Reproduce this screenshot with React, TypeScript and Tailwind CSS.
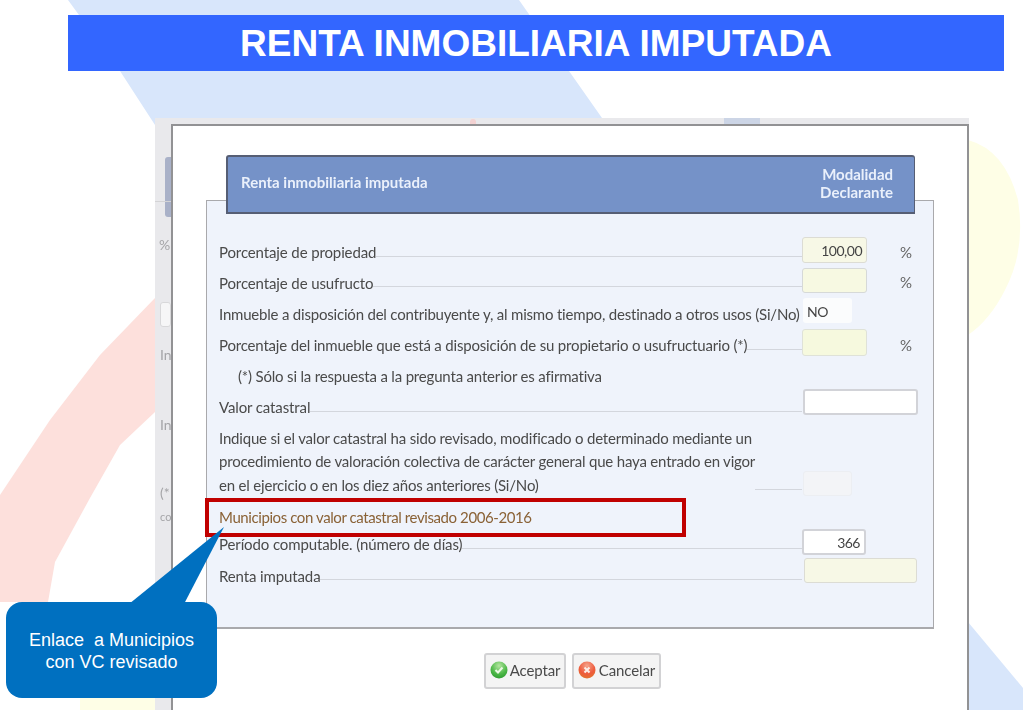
import type { ReactNode } from 'react';

const dialogFont = "font-['Lato','Noto_Sans',sans-serif]";

function Background() {
  return (
    <svg className="absolute left-0 top-0 w-[1023px] h-[710px]" viewBox="0 0 1023 710">
      <path d="M68 0 L519 0 L569 71 L602 118 L155 125 L120 71 Z" fill="#d8e6fb" />
      <path d="M968 622 L1023 688 L1023 710 L968 710 Z" fill="#d8e6fb" />
      <path d="M155 298 L100 355 L50 420 L0 495 L0 602 L48 602 L55 562 L90 498 L120 445 L155 412 Z" fill="#fde0dc" />
      <path d="M968 140 Q1005 150 1018 200 Q1026 250 1005 290 Q990 320 968 335 Z" fill="#fefee6" />
      <rect x="80" y="698" width="75" height="12" fill="#fefee6" />
    </svg>
  );
}

function Field({ className, children }: { className: string; children?: ReactNode }) {
  return (
    <div className={`h-full flex items-center px-[4px] text-[14px] tracking-[-0.5px] rounded-[3px] text-[#444] ${className}`}>
      {children}
    </div>
  );
}

interface RowProps {
  label: string;
  height: string;
  offset: string;
  labelShift?: string;
  lineShift?: string;
  field: ReactNode;
  percent?: boolean;
}

function Row({ label, height, offset, labelShift = '', lineShift = 'mb-[6px]', field, percent }: RowProps) {
  return (
    <div className={`flex items-end ${height} ${offset}`}>
      <div className="w-[583px] flex items-end h-full">
        <span className={`leading-5 whitespace-nowrap ${labelShift}`}>{label}</span>
        <div className={`flex-1 border-b border-[#d3d6dd] ${lineShift}`} />
      </div>
      {field}
      {percent && <span className="ml-[33px] mb-[1px] w-[15px] leading-5 text-[#666]">%</span>}
    </div>
  );
}

function OkIcon() {
  return (
    <svg width="18" height="18" viewBox="0 0 18 18">
      <defs>
        <radialGradient id="okFill" cx="50%" cy="25%" r="80%">
          <stop offset="0%" stopColor="#b4e6a0" />
          <stop offset="60%" stopColor="#4db848" />
          <stop offset="100%" stopColor="#2b9a2e" />
        </radialGradient>
      </defs>
      <circle cx="9" cy="9" r="8.5" fill="url(#okFill)" />
      <path d="M5.5 9 L8 11.5 L12.5 6.5" fill="none" stroke="#ecf9e6" strokeWidth="2" />
    </svg>
  );
}

function CancelIcon() {
  return (
    <svg width="18" height="18" viewBox="0 0 18 18">
      <defs>
        <radialGradient id="cancelFill" cx="50%" cy="25%" r="80%">
          <stop offset="0%" stopColor="#f5a58c" />
          <stop offset="60%" stopColor="#ee5a3c" />
          <stop offset="100%" stopColor="#e0762c" />
        </radialGradient>
      </defs>
      <circle cx="9" cy="9" r="8.5" fill="url(#cancelFill)" />
      <path d="M6.5 6.5 L11.5 11.5 M11.5 6.5 L6.5 11.5" fill="none" stroke="#fdeee8" strokeWidth="2" />
    </svg>
  );
}

function Backdrop() {
  return (
    <div className="w-[16px] shrink-0 flex flex-col text-[14px] text-[#a5a5a8] overflow-hidden blur-[0.4px]">
      <div className="mt-[33px] h-[60px] ml-[10px] bg-[#a9b1c8] rounded-l-[3px]" />
      <div className="mt-[-16px] mb-[15px] border-b border-[#d4d4d6]" />
      <span className="mt-[18px] ml-[4px] leading-5">%</span>
      <div className="mt-[47px] ml-[5px] h-[25px] bg-[#f6f6f7] border border-[#d8d8da] rounded-[3px]" />
      <span className="mt-[18px] ml-[5px] leading-5">In</span>
      <span className="mt-[50px] ml-[5px] leading-5">In</span>
      <span className="mt-[48px] ml-[5px] leading-5">(*</span>
      <span className="mt-[4px] ml-[5px] leading-5 text-[11px]">co</span>
    </div>
  );
}

export default function App() {
  return (
    <div className="relative w-[1023px] h-[710px] overflow-hidden bg-white">
      <Background />

      <div className="relative flex flex-col">
        <h1 className="ml-[68px] mt-[15px] w-[936px] h-[56px] pt-[2px] bg-[#3366ff] flex items-center justify-center text-white font-bold text-[37px] font-['Liberation_Sans',Arial,sans-serif]">
          RENTA INMOBILIARIA IMPUTADA
        </h1>

        <div className={`ml-[155px] mt-[47px] w-[814px] h-[592px] flex flex-col bg-[#e9e9ec] ${dialogFont}`}>
          <div className="h-[6px] shrink-0 flex items-start">
            <div className="ml-[315px] mt-[1px] w-[6px] h-[5px] rounded-t-full bg-[#f3d2d2]" />
            <div className="ml-[248px] w-[36px] h-[6px] bg-[#ccd5e6]" />
          </div>
          <div className="flex flex-1 min-h-0">
            <Backdrop />

            <div className="flex-1 bg-white border-2 border-b-0 border-[#929294] blur-[0.4px]">
              <div className="ml-[53px] mr-[52px] mt-[29px] mb-[-14px] h-[59px] relative z-10 flex items-center justify-between bg-[#7592c8] border-2 border-r border-[#565e74] rounded-t-[3px] pl-[13px] pr-[21px] text-[#eaf0fb] font-bold text-[15px]">
                <span className="mb-[4px]">Renta inmobiliaria imputada</span>
                <span className="text-right leading-[18px] mb-[3px]">
                  Modalidad
                  <br />
                  Declarante
                </span>
              </div>

              <div className="mx-[33px] h-[429px] bg-[#eff3fb] border border-b-2 border-[#a9a9ac] pl-[12px] pt-[36px] text-[15px] tracking-[-0.12px] text-[#4a4a4a]">
                <Row
                  label="Porcentaje de propiedad"
                  height="h-[26px]"
                  offset=""
                  labelShift="mb-[1px]"
                  percent
                  field={<Field className="w-[65px] justify-end bg-[#f7f8e6] border border-[#dcdcd4]">100,00</Field>}
                />
                <Row
                  label="Porcentaje de usufructo"
                  height="h-[25px]"
                  offset="mt-[5px]"
                  percent
                  field={<Field className="w-[65px] bg-[#f7f9e2] border border-[#d6d9d8]" />}
                />
                <Row
                  label="Inmueble a disposición del contribuyente y, al mismo tiempo, destinado a otros usos (Si/No)"
                  height="h-[25px]"
                  offset="mt-[5px]"
                  labelShift="-mb-[1px] tracking-[-0.2px]"
                  lineShift="hidden"
                  field={<Field className="w-[49px] ml-[1px] pt-[2px] bg-[#fbfcfd] text-[#222]">NO</Field>}
                />
                <Row
                  label="Porcentaje del inmueble que está a disposición de su propietario o usufructuario (*)"
                  height="h-[27px]"
                  offset="mt-[6px]"
                  labelShift="mb-[1px] tracking-[-0.18px]"
                  percent
                  field={<Field className="w-[65px] bg-[#f6f9de] border border-[#dfe2d8]" />}
                />
                <p className="mt-[9px] h-[22px] pl-[19px] leading-[22px] tracking-[-0.18px]">(*) Sólo si la respuesta a la pregunta anterior es afirmativa</p>
                <Row
                  label="Valor catastral"
                  height="h-[26px]"
                  offset="mt-[2px]"
                  labelShift="-mb-[2px]"
                  lineShift="mb-[3px]"
                  field={<Field className="w-[115px] ml-[1px] bg-white border-2 border-[#d2d3d8]" />}
                />

                <div className="mt-[11px] h-[71px] flex items-end">
                  <p className="w-[536px] shrink-0 leading-[23.5px] whitespace-nowrap tracking-[-0.19px]">
                    Indique si el valor catastral ha sido revisado, modificado o determinado mediante un
                    <br />
                    procedimiento de valoración colectiva de carácter general que haya entrado en vigor
                    <br />
                    en el ejercicio o en los diez años anteriores (Si/No)
                  </p>
                  <div className="w-[47px] mb-[7px] border-b border-[#d3d6dd]" />
                  <div className="w-[49px] h-[25px] ml-[1px] mb-[1px]">
                    <Field className="bg-[#f3f4f7] border border-[#eceef2]" />
                  </div>
                </div>

                <p className="mt-[8px] h-[24px] leading-[24px] tracking-[-0.41px] text-[#8a6236]">Municipios con valor catastral revisado 2006-2016</p>

                <Row
                  label="Período computable. (número de días)"
                  height="h-[26px]"
                  offset=""
                  labelShift="mb-[1px]"
                  field={<Field className="w-[64px] justify-end bg-white border-2 border-[#d2d3d8] text-[#333]">366</Field>}
                />
                <Row
                  label="Renta imputada"
                  height="h-[25px]"
                  offset="mt-[3px]"
                  labelShift="-mb-[3px]"
                  lineShift="mb-[3px]"
                  field={<Field className="w-[113px] ml-[2px] bg-[#f7f8e6] border border-[#dcdcd4]" />}
                />
              </div>

              <div className="mt-[24px] flex justify-center gap-[6px] pl-[5px] text-[15px] tracking-[-0.12px] text-[#4a4a4a]">
                <button className="w-[82px] h-[36px] pb-[2px] flex items-center justify-center gap-[2px] bg-[#f4f4f4] border-2 border-[#d2d2d4] rounded-[3px]">
                  <OkIcon />
                  Aceptar
                </button>
                <button className="w-[89px] h-[36px] pb-[2px] flex items-center justify-center gap-[3px] bg-[#f4f4f4] border-2 border-[#d2d2d4] rounded-[3px]">
                  <CancelIcon />
                  Cancelar
                </button>
              </div>
            </div>
          </div>
        </div>
      </div>

      {/* Anotaciones sobre la captura */}
      <div className="absolute left-[205px] top-[498px] w-[481px] h-[39px] border-4 border-[#c00000]" />

      <svg className="absolute left-[120px] top-[525px] w-[110px] h-[80px]" viewBox="0 0 110 80">
        <path d="M9 79 L104 2 L64 79 Z" fill="#0070c0" />
      </svg>
      <div className="absolute left-[6px] top-[602px] w-[211px] h-[96px] pt-[2px] rounded-[16px] bg-[#0070c0] flex items-center justify-center text-center text-white text-[18px] leading-[22px] whitespace-pre font-['Liberation_Sans',Arial,sans-serif]">
        {'Enlace  a Municipios\ncon VC revisado'}
      </div>
    </div>
  );
}
